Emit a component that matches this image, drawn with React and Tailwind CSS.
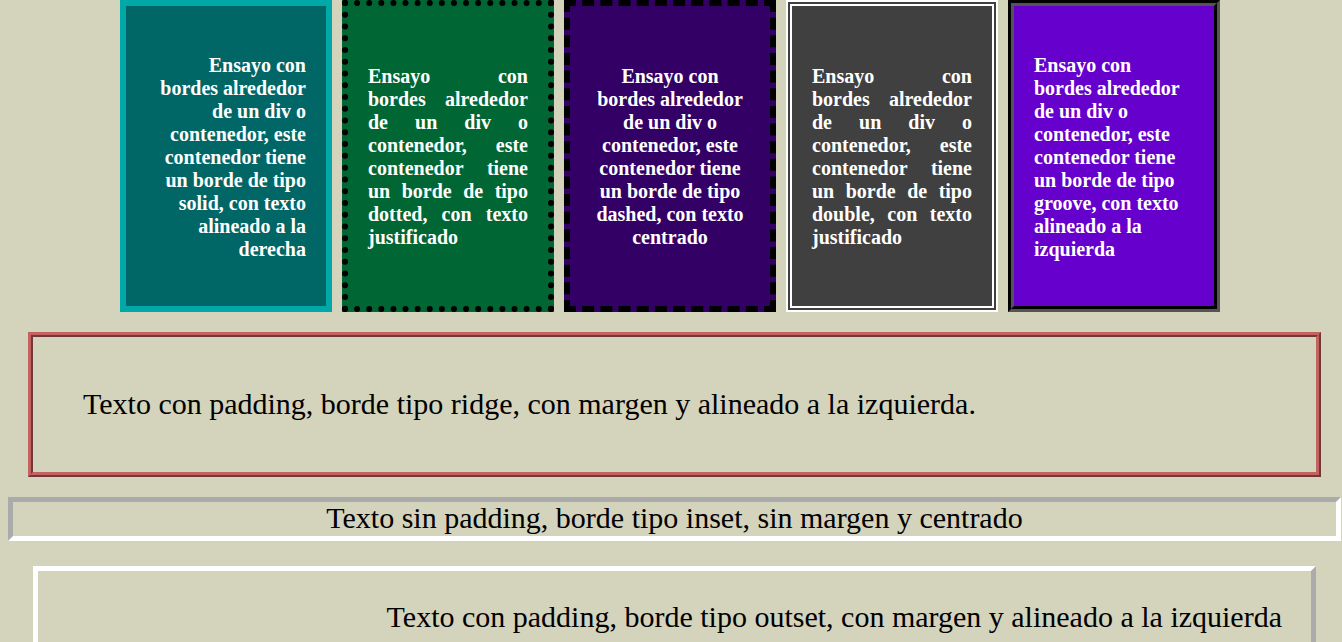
export default function App() {
  const serif = "font-['Liberation_Serif','Times_New_Roman',serif]"
  const cardText = `w-full text-[20px] leading-[23px] font-bold text-white ${serif}`
  const txt = "Ensayo con bordes alrededor de un div o contenedor, este contenedor tiene un borde de tipo"

  return (
    <div className={`min-h-[642px] bg-[#d4d3bc] text-black ${serif} overflow-hidden`}>
      <div className="ml-[8px] w-[1333px]">
        {/* fila de cajas */}
        <div className="flex gap-[10px] pl-[112px]">
          <div className="flex h-[312px] w-[212px] items-center border-[6px] border-solid border-[#00a8a8] bg-[#006666] px-[20px] pt-[2px]">
            <p className={`${cardText} text-right`}>{txt} solid, con texto alineado a la derecha</p>
          </div>
          <div className="flex h-[312px] w-[212px] items-center border-[6px] border-dotted border-black bg-[#006633] px-[20px] pt-[2px]">
            <p className={`${cardText} text-justify`}>{txt} dotted, con texto justificado</p>
          </div>
          <div className="flex h-[312px] w-[212px] items-center border-[6px] border-dashed border-black bg-[#330066] px-[20px] pt-[2px]">
            <p className={`${cardText} text-center`}>{txt} dashed, con texto centrado</p>
          </div>
          <div className="flex h-[312px] w-[212px] items-center border-[6px] border-double border-white bg-[#404040] px-[20px] pt-[2px]">
            <p className={`${cardText} text-justify`}>{txt} double, con texto justificado</p>
          </div>
          <div className="flex h-[312px] w-[212px] items-center border-[6px] [border-style:groove] border-black bg-[#6600cc] px-[20px] pt-[2px]">
            <p className={`${cardText} text-left`}>{txt} groove, con texto alineado a la izquierda</p>
          </div>
        </div>

        {/* ridge */}
        <div className="mx-[20px] my-[20px] border-[5px] [border-style:ridge] border-[#c46262] p-[50px] text-left text-[30px] leading-[34.5px]">
          Texto con padding, borde tipo ridge, con margen y alineado a la izquierda.
        </div>

        {/* inset */}
        <div className="border-[5px] [border-style:inset] border-white text-center text-[30px] leading-[34px]">
          <p className="-mt-[1px] pb-[1px]">Texto sin padding, borde tipo inset, sin margen y centrado</p>
        </div>

        {/* outset */}
        <div className="mx-[25px] mt-[25px] border-[5px] [border-style:outset] border-white pt-[29px] pr-[29px] pb-[30px] text-right text-[30px] leading-[34.5px]">
          Texto con padding, borde tipo outset, con margen y alineado a la izquierda
        </div>
      </div>
    </div>
  )
}
